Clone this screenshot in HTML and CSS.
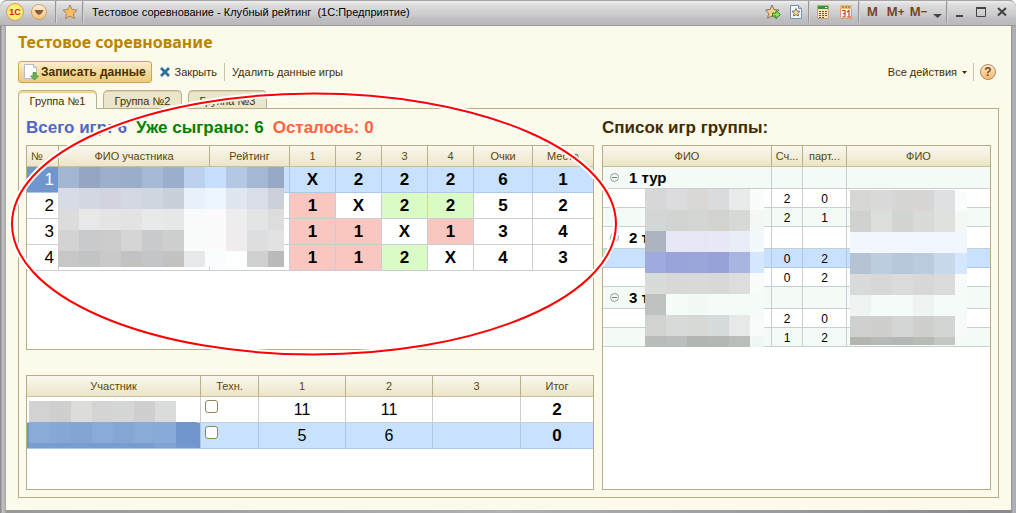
FILE: index.html
```html
<!DOCTYPE html>
<html lang="ru">
<head>
<meta charset="utf-8">
<title>Тестовое соревнование - Клубный рейтинг</title>
<link rel="stylesheet" href="styles.css">
</head>
<body>
<div class="window">
  <header class="titlebar">
    <button class="logo" type="button" aria-label="Меню">1С</button>
    <button class="round" type="button" aria-label="Список"><svg width="18" height="18" viewBox="0 0 18 18"><defs><linearGradient id="or" x2="0" y2="1"><stop offset="0" stop-color="#fff2dc"/><stop offset="1" stop-color="#f3bf72"/></linearGradient></defs><circle cx="9" cy="9" r="7.5" fill="url(#or)" stroke="#c9a06a"/><path d="M4.500 7h9Q12 11 9 12 6 11 4.500 7z" fill="#80603f"/></svg></button>
    <span class="sep"></span>
    <button class="tool" type="button" aria-label="Избранное"><svg width="16" height="16" viewBox="0 0 16 16"><path d="M8 1l2.1 4.6 5 .6-3.700 3.400 1 5L8 12.100l-4.400 2.500 1-5L.9 6.200l5-.6z" fill="#ffbd62" stroke="#a58358"/></svg></button>
    <span class="sep"></span>
    <span class="caption">Тестовое соревнование - Клубный рейтинг&nbsp; (1С:Предприятие)</span>
    <button class="tool" type="button" aria-label="Добавить в избранное"><svg width="16" height="16" viewBox="0 0 16 16"><path d="M7 1l2 4.500 5 .5-3.600 3.400 1 4.800L7 12l-4.300 2.200 1-4.800L.6 6l4.600-.5z" fill="#fbd08a" stroke="#7d7460"/><path d="M7.500 9h3.500V6.500l4.500 4-4.500 4V12H7.500z" fill="#8ee05a" stroke="#2f8a20"/></svg></button>
    <button class="tool" type="button" aria-label="Ссылка"><svg width="16" height="16" viewBox="0 0 16 16"><path d="M2.500 1.500h8l3 3v10h-11z" fill="#eff6fc" stroke="#6f93b3"/><path d="M10.500 1.500v3h3" fill="#b7d0e6" stroke="#6f93b3"/><path d="M8 4.500l1.200 2.500 2.800.3-2 1.900.5 2.800L8 10.700 5.500 12 6 9.200l-2-1.900L6.800 7z" fill="#fcd79a" stroke="#5f5a50" stroke-width=".8"/></svg></button>
    <span class="sep"></span>
    <button class="tool" type="button" aria-label="Калькулятор"><svg width="16" height="16" viewBox="0 0 16 16"><path d="M2.500 1.500h11v13h-11z" fill="#fbe3bb" stroke="#c9a575"/><path d="M3 2h10v3H3z" fill="#3d8f3d"/><path d="M10 3h2v1h-2z" fill="#fff"/><path d="M4 7.500h8M4 9.500h8M4 11.500h8M4 13.500h5" stroke="#6b5038" stroke-dasharray="2 1"/></svg></button>
    <button class="tool" type="button" aria-label="Календарь"><svg width="16" height="16" viewBox="0 0 16 16"><path d="M2.500 2.500h11v12h-11z" fill="#fff6e8" stroke="#c9a575"/><path d="M2 1h12v4H2z" fill="#e9bb78"/><path d="M4 3h2M7 3h2M10 3h2" stroke="#7c5a38"/><path d="M4 6.500h3v3H5h2v3.500H4M9 8l2-1.500V13M9 13h4" fill="none" stroke="#d8402a" stroke-width="1.200"/></svg></button>
    <span class="sep"></span>
    <button class="tool mem" type="button">M</button>
    <button class="tool mem" type="button">M+</button>
    <button class="tool mem" type="button">M−</button>
    <button class="more" type="button" aria-label="Ещё"><svg width="9" height="16" viewBox="0 0 9 16"><path d="M0 10h9l-4.500 4z" fill="#454545"/></svg></button>
    <span class="sep"></span>
    <button class="win" type="button" aria-label="Свернуть"><svg width="12" height="12" viewBox="0 0 12 12"><path d="M2 9h7v2H2z" fill="#444"/></svg></button>
    <button class="win" type="button" aria-label="Развернуть"><svg width="12" height="12" viewBox="0 0 12 12"><path d="M1.500 2v8.500h9V2" fill="none" stroke="#444"/><path d="M1 1h10v2H1z" fill="#444"/></svg></button>
    <button class="win" type="button" aria-label="Закрыть окно"><svg width="12" height="12" viewBox="0 0 12 12"><path d="M2 2l8 7.500M10 2L2 9.500" stroke="#444" stroke-width="2.200"/></svg></button>
  </header>

  <main class="content">
    <h1>Тестовое соревнование</h1>
    <div class="toolbar">
      <button class="save" type="button"><svg width="16" height="18" viewBox="0 0 16 18"><path d="M1.500 1.500h9l3 3v11h-12z" fill="#fff" stroke="#b5bcc6"/><path d="M10.500 1.500v3h3" fill="#dfe6ee" stroke="#b5bcc6"/><path d="M10 9.500h3v3.500h2.500l-4 4-4-4H10z" fill="#69b455" stroke="#3f8a35" stroke-width=".7"/></svg>Записать данные</button>
      <button class="cmd close" type="button"><svg width="10" height="10" viewBox="0 0 10 10"><path d="M1 1l8 8M9 1L1 9" stroke="#2f6f9f" stroke-width="2.800"/></svg>Закрыть</button>
      <span class="bar"></span>
      <button class="cmd" type="button">Удалить данные игры</button>
      <button class="cmd actions" type="button">Все действия<svg width="5" height="3" viewBox="0 0 5 3"><path d="M0 0h5L2.500 3z" fill="#3f2f00"/></svg></button>
      <span class="bar"></span>
      <button class="help" type="button" aria-label="Справка">?</button>
    </div>

    <div class="tabs" role="tablist">
      <button class="tab active" role="tab" aria-selected="true" type="button">Группа №1</button>
      <button class="tab" role="tab" type="button">Группа №2</button>
      <button class="tab" role="tab" type="button">Группа №3</button>
    </div>

    <section class="panel">
      <div class="column">
        <h2><span class="total">Всего игр: 6</span><span class="played">Уже сыграно: 6</span><span class="left">Осталось: 0</span></h2>
        <div class="sheet standings">
          <table>
            <colgroup><col class="w32"><col><col class="w80"><col class="w46"><col class="w46"><col class="w46"><col class="w46"><col class="w59"><col class="w60"></colgroup>
            <thead><tr><th class="num">№</th><th>ФИО участника</th><th>Рейтинг</th><th>1</th><th>2</th><th>3</th><th>4</th><th>Очки</th><th>Место</th></tr></thead>
            <tbody>
              <tr class="selected"><td class="num current">1</td><td></td><td></td><td>X</td><td>2</td><td>2</td><td>2</td><td>6</td><td>1</td></tr>
              <tr><td class="num">2</td><td></td><td></td><td class="loss">1</td><td>X</td><td class="won">2</td><td class="won">2</td><td>5</td><td>2</td></tr>
              <tr><td class="num">3</td><td></td><td></td><td class="loss">1</td><td class="loss">1</td><td>X</td><td class="loss">1</td><td>3</td><td>4</td></tr>
              <tr><td class="num">4</td><td></td><td></td><td class="loss">1</td><td class="loss">1</td><td class="won">2</td><td>X</td><td>4</td><td>3</td></tr>
            </tbody>
          </table>
          <svg class="mosaic names" data-mosaic="names" width="226" height="100"></svg>
        </div>
        <div class="sheet scores">
          <table>
            <colgroup><col><col class="w58"><col class="w87"><col class="w87"><col class="w88"><col class="w72"></colgroup>
            <thead><tr><th>Участник</th><th>Техн.</th><th>1</th><th>2</th><th>3</th><th>Итог</th></tr></thead>
            <tbody>
              <tr><td></td><td class="check"><input type="checkbox" aria-label="Техн., строка 1"></td><td>11</td><td>11</td><td></td><td class="sum">2</td></tr>
              <tr class="selected"><td class="current"></td><td class="check"><input type="checkbox" aria-label="Техн., строка 2"></td><td>5</td><td>6</td><td></td><td class="sum">0</td></tr>
            </tbody>
          </table>
          <svg class="mosaic players" data-mosaic="players" width="168" height="47"></svg>
        </div>
      </div>

      <div class="column">
        <h2>Список игр группы:</h2>
        <div class="sheet games">
          <table>
            <colgroup><col><col class="w31"><col class="w44"><col class="w143"></colgroup>
            <thead><tr><th>ФИО</th><th>Сч...</th><th>парт...</th><th>ФИО</th></tr></thead>
            <tbody>
              <tr class="round-row tint"><td><button class="fold" type="button" aria-label="Свернуть 1 тур"></button>1 тур</td><td></td><td></td><td></td></tr>
              <tr><td></td><td>2</td><td>0</td><td></td></tr>
              <tr class="tint"><td></td><td>2</td><td>1</td><td></td></tr>
              <tr class="round-row"><td><button class="fold" type="button" aria-label="Свернуть 2 тур"></button>2 тур</td><td></td><td></td><td></td></tr>
              <tr class="selected"><td></td><td>0</td><td>2</td><td></td></tr>
              <tr><td></td><td>0</td><td>2</td><td></td></tr>
              <tr class="round-row tint"><td><button class="fold" type="button" aria-label="Свернуть 3 тур"></button>3 тур</td><td></td><td></td><td></td></tr>
              <tr><td></td><td>2</td><td>0</td><td></td></tr>
              <tr class="tint"><td></td><td>1</td><td>2</td><td></td></tr>
            </tbody>
          </table>
          <svg class="mosaic first" data-mosaic="first" width="119" height="158"></svg>
          <svg class="mosaic second" data-mosaic="second" width="117" height="155"></svg>
        </div>
      </div>
    </section>
  </main>

  <svg class="marker" width="612" height="270" viewBox="0 0 612 270" aria-hidden="true"><g fill="none"><ellipse cx="306" cy="135" rx="302" ry="130.500" stroke="#fff" stroke-width="6"/><ellipse cx="306" cy="135" rx="302" ry="130.500" stroke="#f00" stroke-width="2"/></g></svg>
</div>
<script src="script.js"></script>
</body>
</html>
```
FILE: styles.css
```css
* { box-sizing: border-box; }

body {
  margin: 0;
  background: #fff;
  color: #3f2f00;
  font: 11px/16px "Liberation Sans", Arial, sans-serif;
}

button {
  display: flex;
  align-items: center;
  justify-content: center;
  margin: 0;
  padding: 0;
  border: 0;
  background: none;
  color: inherit;
  font: inherit;
  white-space: nowrap;
}

.window {
  position: relative;
  display: flex;
  flex-direction: column;
  min-height: 100vh;
  padding: 0 5px 3px 6px;
  border-radius: 7px 7px 0 0;
  background: linear-gradient(90deg, #8c8c8c 0, #8c8c8c 1px, #c2c2c2 2px, #b4b4b4 5px, #999 6px, #b0b0b4 50%, #888a90 calc(100% - 5px), #b4b5ba calc(100% - 3px), #a8a9ae 100%);
}

/* title bar */
.titlebar {
  display: flex;
  align-items: center;
  height: 26px;
  margin: 0 -5px 0 -6px;
  padding: 0 4px 2px 6px;
  border-top: 1px solid #a5a5a5;
  border-bottom: 1px solid #999;
  border-radius: 7px 7px 0 0;
  background: linear-gradient(#eee 0, #dcdcdc 4px, #cdcdcf 13px, #bfbfc1 18px, #b9b9bc 100%);
}

.logo {
  width: 18px;
  height: 18px;
  border: 1px solid #c9a06a;
  border-radius: 50%;
  background: radial-gradient(#fff9a0, #ffe14a);
  color: #d8201a;
  font-size: 9px;
  font-weight: bold;
}

.round { width: 18px; margin: 0 6px; }

.sep {
  width: 1px;
  height: 22px;
  margin: 0 2px 0 1px;
  background: #97979a;
  box-shadow: 1px 0 #d5d5d7;
}

.tool { width: 23px; height: 20px; }

.caption {
  flex: 1;
  padding-left: 7px;
  color: #000;
  white-space: nowrap;
}

.mem {
  color: #7a4424;
  font-family: "Open Sans", sans-serif;
  font-size: 12px;
  font-weight: bold;
}

.more { width: 15px; }
.win { width: 21px; }

/* command area */
.content {
  display: flex;
  flex: 1;
  flex-direction: column;
  padding: 0 12px 12px;
  background: #fcfaeb;
}

h1 {
  margin: 0 0 3px;
  color: #b98500;
  font: bold 16px/32px "Noto Sans", sans-serif;
}

.toolbar {
  display: flex;
  align-items: center;
  height: 22px;
  margin-bottom: 7px;
}

.save {
  gap: 2px;
  height: 22px;
  padding: 0 5px 0 4px;
  border: 1px solid #cfa44f;
  border-radius: 3px;
  background: linear-gradient(#fbeed0, #f2d795 60%, #edcc7d);
  color: #4a2f00;
  font-size: 12px;
  font-weight: bold;
}

.close { gap: 5px; margin: 0 7px 0 8px; }

.bar {
  width: 1px;
  height: 18px;
  background: #c9c4a8;
}

.bar + .cmd { margin-left: 7px; }

.toolbar .actions { gap: 5px; margin: 0 12px 0 auto; }

.help {
  width: 16px;
  height: 16px;
  margin: 0 3px 0 6px;
  border: 1px solid #a98a68;
  border-radius: 50%;
  background: linear-gradient(#fde9cd, #f9b86c);
  color: #7a4a1c;
  font-size: 12px;
  font-weight: bold;
}

.toolbar .actions { margin-right: 6px; }

/* tabs */
.tabs { display: flex; gap: 6px; }

.tab {
  width: 79px;
  height: 18px;
  padding-top: 2px;
  border: 1px solid #b9b18a;
  border-bottom: 0;
  border-radius: 5px 5px 0 0;
  background: #ebe5cb;
  box-shadow: inset 0 1px #d8cfa8;
}

.tab.active {
  z-index: 1;
  height: 19px;
  margin-bottom: -1px;
  background: #fcfaeb;
  box-shadow: inset 0 2px #f0d68c;
}

.panel {
  display: grid;
  flex: 1;
  grid-template-columns: minmax(0, 568fr) minmax(0, 389fr);
  gap: 8px;
  padding: 0 7px 7px;
  border: 1px solid #b5ad84;
}

.column { display: flex; flex-direction: column; }

h2 {
  display: flex;
  gap: 9px;
  margin: 0;
  padding-top: 2px;
  font-size: 17px;
  line-height: 34px;
  white-space: nowrap;
}

.total { color: #5266c4; }
.played { color: #008000; }
.left { color: #ff6340; }

/* sheets */
.sheet {
  position: relative;
  flex: 1 1 auto;
  border: 1px solid #b5ad84;
  background: #fff;
}

.standings { margin-bottom: 25px; }
.scores { flex: none; min-height: 115px; }

table {
  width: 100%;
  border-spacing: 0;
  table-layout: fixed;
}

.w31 { width: 31px; }
.w32 { width: 32px; }
.w44 { width: 44px; }
.w46 { width: 46px; }
.w58 { width: 58px; }
.w59 { width: 59px; }
.w60 { width: 60px; }
.w72 { width: 72px; }
.w80 { width: 80px; }
.w87 { width: 87px; }
.w88 { width: 88px; }
.w143 { width: 143px; }

th {
  height: 21px;
  padding: 0;
  border-right: 1px solid #b9b18a;
  border-bottom: 1px solid #c8c09c;
  background: linear-gradient(#f9f8f0, #ece5c6);
  color: #5c4708;
  font-weight: normal;
  white-space: nowrap;
}

th.num { padding-left: 4px; text-align: left; }

td {
  height: 26px;
  padding: 1px 0 0;
  border-right: 1px solid #c8ced4;
  border-bottom: 1px solid #c8ced4;
  color: #000;
  font-size: 17px;
  text-align: center;
}

th:last-child, td:last-child { border-right: 0; }

.standings td, td.sum { font-weight: bold; }
.standings td.num { padding-right: 4px; font-weight: normal; text-align: right; }
.scores td { font-size: 16px; }
.scores td.sum { font-size: 17px; }

.loss { background: #f9c6c0; }
.won { background: #dafac6; }

.selected td { border-color: #b0c8e8; background: #c8e1ff; }
.selected td.current { background: #7096ce; color: #fff; }

td.check { padding: 3px 0 0 4px; text-align: left; vertical-align: top; }

.check input {
  display: block;
  width: 13px;
  height: 13px;
  margin: 0;
  border: 1px solid #8f8560;
  border-radius: 3px;
  background: #fff;
  appearance: none;
}

.games td { height: 19px; font-size: 12px; }
.tint td { background: #f4fbf7; }

.games .round-row td {
  height: 22px;
  padding: 0 0 0 7px;
  font-size: 15px;
  font-weight: bold;
  text-align: left;
}

.fold {
  display: inline-flex;
  width: 9px;
  height: 9px;
  margin-right: 10px;
  border: 1px solid #999;
  border-radius: 50%;
  vertical-align: 5px;
}

.fold::before {
  width: 5px;
  height: 1px;
  background: #777;
  content: "";
}

/* blurred names and hand-drawn mark lie over the sheets */
.mosaic { position: absolute; shape-rendering: crispEdges; }
.names { top: 21px; left: 31px; }
.players { top: 25px; left: 2px; }
.first { top: 43px; left: 42px; }
.second { top: 44px; left: 247px; }

.marker {
  position: absolute;
  top: 89px;
  left: 8px;
  pointer-events: none;
}
```
FILE: script.js
```js
// Colours of the pixelated blocks, one string per row; "-" leaves a block clear.
const CELL = 21;
const mosaics = {
  names: [
    "a3b7d2 94a6c0 9dafca 9aaec9 a6b9d5 9bafcd bbd1ef c7dfff b4c8e4 a5b8d3 97a9c4",
    "d7dbe6 d3d7e0 d1d4de d3d8e2 d0d6e0 cad0da e7f0fb edf5ff e0e6f0 d9dde7 cbd0d9",
    "dcdcdc e8e8e8 e5e5e5 e3e3e4 e8eae9 e6e7e7 f8fafb fbfbfb ededed e3e4e6 dddddd",
    "d3d3d3 c9cacb cbcbcb d5d5d5 c9cacb cecfce fafcfc fafbfa eeecec dddee0 e1e2e1",
    "c7c7c7 c3c5c4 c9c9c9 c4c2c1 c4c5c7 c3c2c1 e6e8e9 fafdfd fdfefe cfd0cf bababa"
  ],
  players: [
    "d2d2d3 cfcfcf dcdcdb d4d4d4 d5d7d6 cfcfcf dadcdb -",
    "8aabd8 86a8d6 83a5d4 8aabd9 86a7d5 8aabd8 89aad8 7096ce",
    "789ed1 789ed1 789ed1 789ed1 789ed1 789ed1 82a3d4 7399d0"
  ],
  first: [
    "d6d7d6 dcdcde d9d8d6 dadbdd e9ebea f9fcfb",
    "d2d6d4 d1d5d2 d3d6d3 d2d3cf d6d9d5 f3f8f5",
    "adb4c1 e6e8f5 e6e7f4 e6e8f5 e9edf8 f3f8fd",
    "9fabdc 98a4da 9aa5da 97a2d9 a8b5e1 d5e8ff",
    "d9dbd9 d7d8d7 d8d9d8 d7d8d7 dcdddc fafcfb",
    "bec3c1 f5fbf7 f3f9f5 f5fbf7 f5fbf7 f5fbf7",
    "d2d3d1 d8dada d6d9d5 d6dbdd e7e9e8 f9fbfb",
    "b8bdb9 babfbe b1b6b2 b3b8b4 b9beba f0f6f4"
  ],
  second: [
    "d7d7d6 dadadb d6d6d5 d7d6d5 dfe0e2 fbfcfc",
    "cfd2cf dbdfdc d1d5d2 d8dbd8 dee1de f3f8f5",
    "f1f6ff f1f6ff f1f6ff f1f6ff f1f6ff f1f6ff",
    "b5c3d4 bdcddf b8c8da bccce0 c8d9ec d5e7ff",
    "d9dbda d6d7d6 dadbda d6d7d6 dadcdb f8fbfa",
    "eff4f2 f5fbf9 f5fbf9 eff4f2 f5fbf9 f5fbf9",
    "cfd0cf cfd0ce d4d6d5 cfcfcd d3d5d4 f8faf9",
    "b4b5af b6bab7 b3b7b6 b9bcb4 c3c7c4 -"
  ]
};

document.querySelectorAll("[data-mosaic]").forEach((svg) => {
  mosaics[svg.dataset.mosaic].forEach((row, y) => {
    row.split(" ").forEach((colour, x) => {
      if (colour === "-") return;
      const rect = document.createElementNS("http://www.w3.org/2000/svg", "rect");
      rect.setAttribute("x", x * CELL);
      rect.setAttribute("y", y * CELL);
      rect.setAttribute("width", CELL);
      rect.setAttribute("height", CELL);
      rect.setAttribute("fill", "#" + colour);
      svg.append(rect);
    });
  });
});
```
